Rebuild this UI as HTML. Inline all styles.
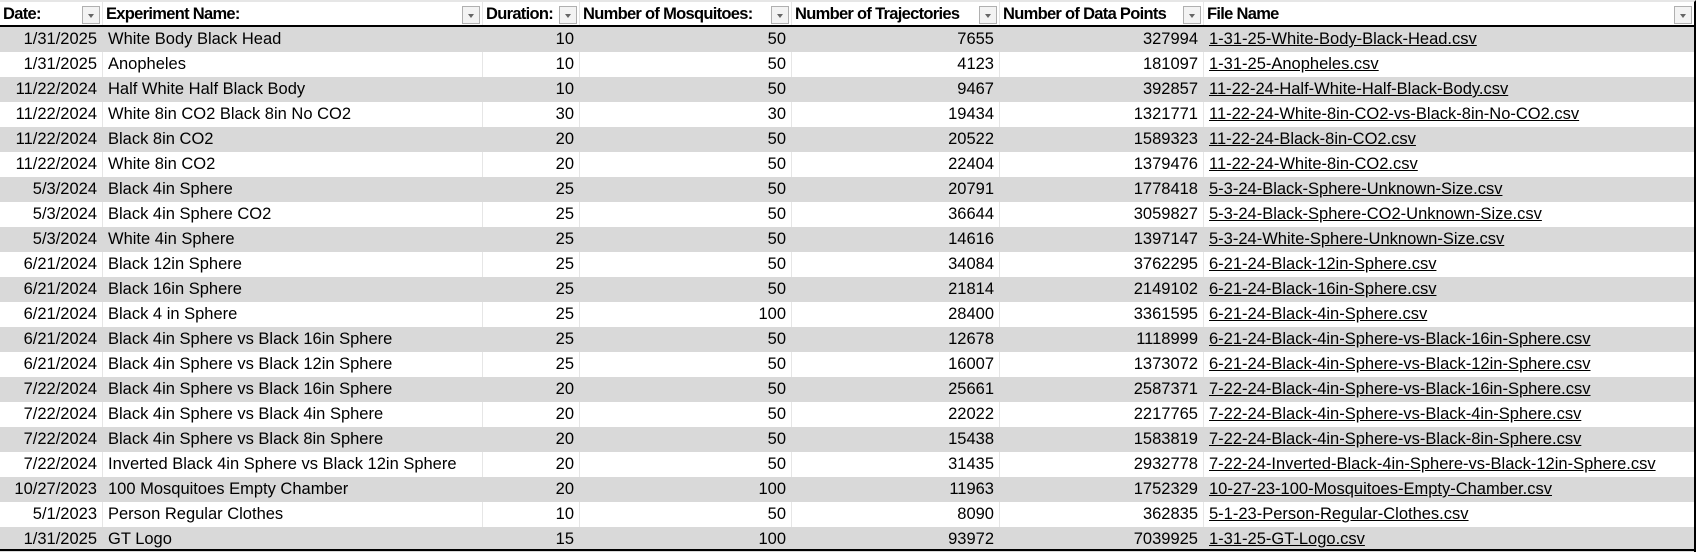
<!DOCTYPE html>
<html><head><meta charset="utf-8"><style>
*{margin:0;padding:0;box-sizing:border-box}
body{width:1696px;height:551px;overflow:hidden;background:#fff;font-family:"Liberation Sans",sans-serif;position:relative}
.t{position:absolute;left:0;top:0;width:1696px;border-right:2px solid #000;border-top:2px solid #e6e6e6}
.r{display:flex;height:25px;line-height:25px;font-size:16.5px;color:#000}
.r.g{background:#d9d9d9}
.h{height:25px;border-bottom:2px solid #000;font-weight:bold;font-size:16.5px;letter-spacing:-0.7px;line-height:24px}
.c{position:relative;border-right:1px solid #e6e6e6;white-space:nowrap;overflow:hidden;padding:0 5px}
.g .c{border-right-color:#d9d9d9}
.n{text-align:right}
.u{text-decoration:underline}
.dd{position:absolute;right:2px;top:4px;width:18px;height:18px;border:1px solid #b0b0b0;background:#f3f3f3}
.dd:after{content:"";position:absolute;left:5px;top:7px;border-left:3px solid transparent;border-right:3px solid transparent;border-top:4px solid #666}
.c1{width:103px}.c2{width:380px}.c3{width:97px}.c4{width:212px}.c5{width:208px}.c6{width:204px}.c7{width:490px;border-right:none}
.h .c{padding-left:3px}
</style></head><body><div class="t">
<div class="r h"><div class="c c1">Date:<span class="dd"></span></div><div class="c c2">Experiment Name:<span class="dd"></span></div><div class="c c3">Duration:<span class="dd"></span></div><div class="c c4">Number of Mosquitoes:<span class="dd"></span></div><div class="c c5">Number of Trajectories<span class="dd"></span></div><div class="c c6">Number of Data Points<span class="dd"></span></div><div class="c c7">File Name<span class="dd"></span></div></div>
<div class="r g"><div class="c c1 n">1/31/2025</div><div class="c c2">White Body Black Head</div><div class="c c3 n">10</div><div class="c c4 n">50</div><div class="c c5 n">7655</div><div class="c c6 n">327994</div><div class="c c7 u">1-31-25-White-Body-Black-Head.csv</div></div>
<div class="r"><div class="c c1 n">1/31/2025</div><div class="c c2">Anopheles</div><div class="c c3 n">10</div><div class="c c4 n">50</div><div class="c c5 n">4123</div><div class="c c6 n">181097</div><div class="c c7 u">1-31-25-Anopheles.csv</div></div>
<div class="r g"><div class="c c1 n">11/22/2024</div><div class="c c2">Half White Half Black Body</div><div class="c c3 n">10</div><div class="c c4 n">50</div><div class="c c5 n">9467</div><div class="c c6 n">392857</div><div class="c c7 u">11-22-24-Half-White-Half-Black-Body.csv</div></div>
<div class="r"><div class="c c1 n">11/22/2024</div><div class="c c2">White 8in CO2 Black 8in No CO2</div><div class="c c3 n">30</div><div class="c c4 n">30</div><div class="c c5 n">19434</div><div class="c c6 n">1321771</div><div class="c c7 u">11-22-24-White-8in-CO2-vs-Black-8in-No-CO2.csv</div></div>
<div class="r g"><div class="c c1 n">11/22/2024</div><div class="c c2">Black 8in CO2</div><div class="c c3 n">20</div><div class="c c4 n">50</div><div class="c c5 n">20522</div><div class="c c6 n">1589323</div><div class="c c7 u">11-22-24-Black-8in-CO2.csv</div></div>
<div class="r"><div class="c c1 n">11/22/2024</div><div class="c c2">White 8in CO2</div><div class="c c3 n">20</div><div class="c c4 n">50</div><div class="c c5 n">22404</div><div class="c c6 n">1379476</div><div class="c c7 u">11-22-24-White-8in-CO2.csv</div></div>
<div class="r g"><div class="c c1 n">5/3/2024</div><div class="c c2">Black 4in Sphere</div><div class="c c3 n">25</div><div class="c c4 n">50</div><div class="c c5 n">20791</div><div class="c c6 n">1778418</div><div class="c c7 u">5-3-24-Black-Sphere-Unknown-Size.csv</div></div>
<div class="r"><div class="c c1 n">5/3/2024</div><div class="c c2">Black 4in Sphere CO2</div><div class="c c3 n">25</div><div class="c c4 n">50</div><div class="c c5 n">36644</div><div class="c c6 n">3059827</div><div class="c c7 u">5-3-24-Black-Sphere-CO2-Unknown-Size.csv</div></div>
<div class="r g"><div class="c c1 n">5/3/2024</div><div class="c c2">White 4in Sphere</div><div class="c c3 n">25</div><div class="c c4 n">50</div><div class="c c5 n">14616</div><div class="c c6 n">1397147</div><div class="c c7 u">5-3-24-White-Sphere-Unknown-Size.csv</div></div>
<div class="r"><div class="c c1 n">6/21/2024</div><div class="c c2">Black 12in Sphere</div><div class="c c3 n">25</div><div class="c c4 n">50</div><div class="c c5 n">34084</div><div class="c c6 n">3762295</div><div class="c c7 u">6-21-24-Black-12in-Sphere.csv</div></div>
<div class="r g"><div class="c c1 n">6/21/2024</div><div class="c c2">Black 16in Sphere</div><div class="c c3 n">25</div><div class="c c4 n">50</div><div class="c c5 n">21814</div><div class="c c6 n">2149102</div><div class="c c7 u">6-21-24-Black-16in-Sphere.csv</div></div>
<div class="r"><div class="c c1 n">6/21/2024</div><div class="c c2">Black 4 in Sphere</div><div class="c c3 n">25</div><div class="c c4 n">100</div><div class="c c5 n">28400</div><div class="c c6 n">3361595</div><div class="c c7 u">6-21-24-Black-4in-Sphere.csv</div></div>
<div class="r g"><div class="c c1 n">6/21/2024</div><div class="c c2">Black 4in Sphere vs Black 16in Sphere</div><div class="c c3 n">25</div><div class="c c4 n">50</div><div class="c c5 n">12678</div><div class="c c6 n">1118999</div><div class="c c7 u">6-21-24-Black-4in-Sphere-vs-Black-16in-Sphere.csv</div></div>
<div class="r"><div class="c c1 n">6/21/2024</div><div class="c c2">Black 4in Sphere vs Black 12in Sphere</div><div class="c c3 n">25</div><div class="c c4 n">50</div><div class="c c5 n">16007</div><div class="c c6 n">1373072</div><div class="c c7 u">6-21-24-Black-4in-Sphere-vs-Black-12in-Sphere.csv</div></div>
<div class="r g"><div class="c c1 n">7/22/2024</div><div class="c c2">Black 4in Sphere vs Black 16in Sphere</div><div class="c c3 n">20</div><div class="c c4 n">50</div><div class="c c5 n">25661</div><div class="c c6 n">2587371</div><div class="c c7 u">7-22-24-Black-4in-Sphere-vs-Black-16in-Sphere.csv</div></div>
<div class="r"><div class="c c1 n">7/22/2024</div><div class="c c2">Black 4in Sphere vs Black 4in Sphere</div><div class="c c3 n">20</div><div class="c c4 n">50</div><div class="c c5 n">22022</div><div class="c c6 n">2217765</div><div class="c c7 u">7-22-24-Black-4in-Sphere-vs-Black-4in-Sphere.csv</div></div>
<div class="r g"><div class="c c1 n">7/22/2024</div><div class="c c2">Black 4in Sphere vs Black 8in Sphere</div><div class="c c3 n">20</div><div class="c c4 n">50</div><div class="c c5 n">15438</div><div class="c c6 n">1583819</div><div class="c c7 u">7-22-24-Black-4in-Sphere-vs-Black-8in-Sphere.csv</div></div>
<div class="r"><div class="c c1 n">7/22/2024</div><div class="c c2">Inverted Black 4in Sphere vs Black 12in Sphere</div><div class="c c3 n">20</div><div class="c c4 n">50</div><div class="c c5 n">31435</div><div class="c c6 n">2932778</div><div class="c c7 u">7-22-24-Inverted-Black-4in-Sphere-vs-Black-12in-Sphere.csv</div></div>
<div class="r g"><div class="c c1 n">10/27/2023</div><div class="c c2">100 Mosquitoes Empty Chamber</div><div class="c c3 n">20</div><div class="c c4 n">100</div><div class="c c5 n">11963</div><div class="c c6 n">1752329</div><div class="c c7 u">10-27-23-100-Mosquitoes-Empty-Chamber.csv</div></div>
<div class="r"><div class="c c1 n">5/1/2023</div><div class="c c2">Person Regular Clothes</div><div class="c c3 n">10</div><div class="c c4 n">50</div><div class="c c5 n">8090</div><div class="c c6 n">362835</div><div class="c c7 u">5-1-23-Person-Regular-Clothes.csv</div></div>
<div class="r g"><div class="c c1 n">1/31/2025</div><div class="c c2">GT Logo</div><div class="c c3 n">15</div><div class="c c4 n">100</div><div class="c c5 n">93972</div><div class="c c6 n">7039925</div><div class="c c7 u">1-31-25-GT-Logo.csv</div></div>
</div>
<div style="position:absolute;left:0;top:549px;width:1696px;height:2px;background:#000"></div>
</body></html>
